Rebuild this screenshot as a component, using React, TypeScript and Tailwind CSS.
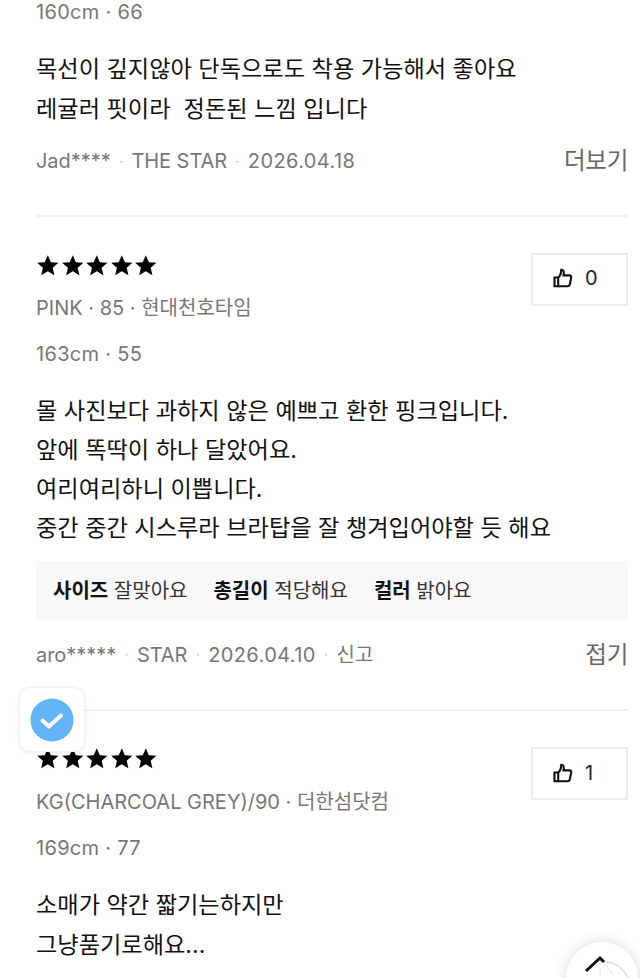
const fontStack = "font-['Inter','Noto_Sans_CJK_KR',sans-serif]";

function Stars() {
  return (
    <div className="flex items-center gap-[1px]">
      {[0, 1, 2, 3, 4].map((i) => (
        <svg key={i} viewBox="0 0 24 24" className="h-[23px] w-[23.6px] fill-black">
          <path d="M12 1.2l3.2 7.3 7.9.7-6 5.2 1.8 7.8L12 18.1l-6.9 4.1 1.8-7.8-6-5.2 7.9-.7z" />
        </svg>
      ))}
    </div>
  );
}

function LikeButton({ count }: { count: number }) {
  return (
    <div className="flex h-[53px] w-[97px] shrink-0 items-center gap-[12px] border-2 border-[#ececec] pb-[2px] pl-[20px] text-[20px] text-[#222]">
      <svg viewBox="0 0 20 20" className="h-[20px] w-[20px] fill-none stroke-[#111] stroke-[2.1]">
        <path d="M1.5 9.5h3.7v8.7H1.5z" />
        <path d="M5.2 9.5c2-1.4 2.9-3.6 3-7.6 2.2-.3 3.2 1.6 2.3 5.5h6c1.3 0 1.9.9 1.7 2l-1.2 6.4c-.3 1.5-1.2 2.4-2.7 2.4H5.2" />
      </svg>
      <span>{count}</span>
    </div>
  );
}

function MetaRow({ items, action }: { items: string[]; action: string }) {
  return (
    <div className="flex items-center justify-between text-[#777]">
      <div className="flex items-center text-[20px]">
        {items.map((item, i) => (
          <span key={item} className="flex items-center">
            {i > 0 && <span className="mx-[8.5px] text-[13px] text-[#bbb]">·</span>}
            <span className={/^\d/.test(item) ? "tracking-[0.4px]" : "tracking-[-0.05px]"}>{item}</span>
          </span>
        ))}
      </div>
      <span className="text-[23.5px] leading-[34.5px] tracking-[-0.3px] text-[#666]">{action}</span>
    </div>
  );
}

function Fit({ label, value }: { label: string; value: string }) {
  return (
    <span className="text-[20px] text-[#333]">
      <b className="font-bold text-[#111]">{label}</b> {value}
    </span>
  );
}

export default function App() {
  return (
    <div className={`relative h-[978px] w-[640px] overflow-hidden bg-white ${fontStack}`}>
      <div className="-mt-[2px] pl-[36px] pr-[12px]">
        <p className="text-[20px] leading-[28px] tracking-[0.3px] text-[#777]">160cm · 66</p>

        <div className="mt-[23px] text-[23.2px] leading-[40px] text-[#111]">
          <p>목선이 깊지않아 단독으로도 착용 가능해서 좋아요</p>
          <p>레귤러 핏이라&nbsp; 정돈된 느낌 입니다</p>
        </div>

        <div className="mt-[15px]">
          <MetaRow items={["Jad****", "THE STAR", "2026.04.18"]} action="더보기" />
        </div>

        <div className="mt-[36px] border-t-2 border-[#f1f1f1]" />

        <section className="pt-[36px]">
          <div className="flex items-start justify-between">
            <div className="pt-[1px]">
              <Stars />
              <p className="mt-[17px] text-[20px] leading-[28px] text-[#777]">PINK · 85 · 현대천호타임</p>
            </div>
            <LikeButton count={0} />
          </div>
          <p className="mt-[18px] text-[20px] leading-[28px] tracking-[0.3px] text-[#777]">163cm · 55</p>

          <div className="mt-[24px] text-[23.2px] leading-[39.3px] text-[#111]">
            <p>몰 사진보다 과하지 않은 예쁘고 환한 핑크입니다.</p>
            <p>앞에 똑딱이 하나 달았어요.</p>
            <p>여리여리하니 이쁩니다.</p>
            <p>중간 중간 시스루라 브라탑을 잘 챙겨입어야할 듯 해요</p>
          </div>

          <div className="mt-[12px] flex h-[60px] items-center gap-[26px] bg-[#f8f8f8] pl-[17px]">
            <Fit label="사이즈" value="잘맞아요" />
            <Fit label="총길이" value="적당해요" />
            <Fit label="컬러" value="밝아요" />
          </div>

          <div className="mt-[17px]">
            <MetaRow items={["aro*****", "STAR", "2026.04.10", "신고"]} action="접기" />
          </div>
        </section>

        <div className="mt-[37px] border-t-2 border-[#f1f1f1]" />

        <section className="pt-[36px]">
          <div className="flex items-start justify-between">
            <div>
              <Stars />
              <p className="mt-[18px] text-[20px] leading-[28px] text-[#777]">KG(CHARCOAL GREY)/90 · 더한섬닷컴</p>
            </div>
            <LikeButton count={1} />
          </div>
          <p className="mt-[18px] text-[20px] leading-[28px] tracking-[0.3px] text-[#777]">169cm · 77</p>
          <div className="mt-[23px] text-[23.2px] leading-[40px] text-[#111]">
            <p>소매가 약간 짧기는하지만</p>
            <p>그냥품기로해요...</p>
          </div>
        </section>
      </div>

      <div className="absolute left-[19px] top-[687px] flex h-[65px] w-[66px] items-center justify-center rounded-[12px] border border-[#f0f0f0] bg-white shadow-[0_1px_5px_rgba(0,0,0,0.08)]">
        <svg viewBox="0 0 44 44" className="h-[44px] w-[44px]">
          <circle cx="22" cy="22" r="21.5" fill="#63b3f9" />
          <path d="M12.5 22.5l6.5 6 12-11" fill="none" stroke="#fff" strokeWidth="4" strokeLinecap="round" strokeLinejoin="round" />
        </svg>
      </div>

      <div className="absolute left-[566px] top-[942px] h-[72px] w-[72px] rounded-full bg-white shadow-[0_0_14px_rgba(0,0,0,0.16)]">
        <svg viewBox="0 0 72 72" className="h-[72px] w-[72px]">
          <path d="M39 20Q54 20 62 36" fill="none" stroke="#ccc" strokeWidth="1" />
          <path d="M34 22V36M38 21l9 12" fill="none" stroke="#eee" strokeWidth="1.5" />
          <path d="M20 29L34 16l4 4" fill="none" stroke="#111" strokeWidth="3" />
        </svg>
      </div>
    </div>
  );
}
